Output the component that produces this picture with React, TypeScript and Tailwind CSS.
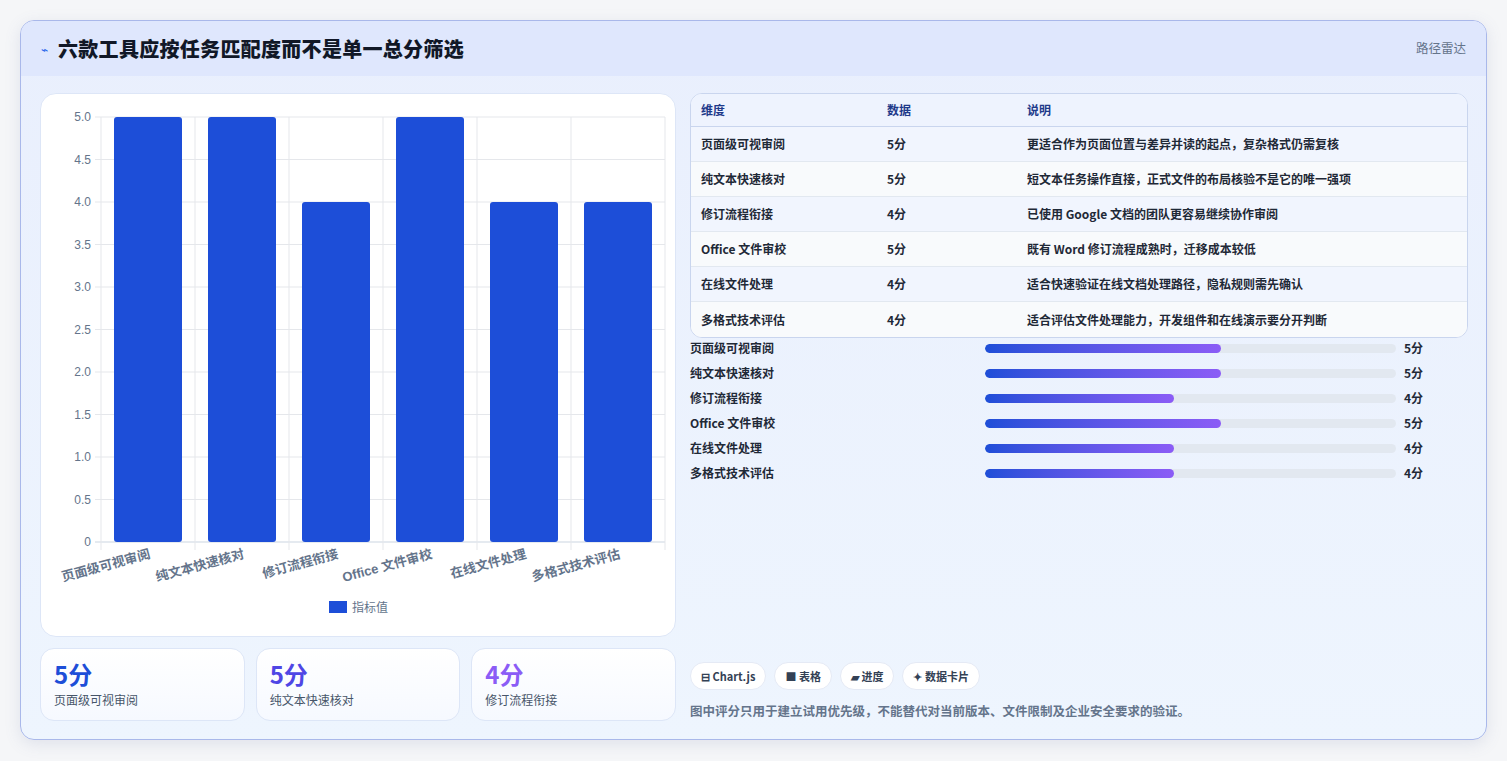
import React from "react";

const cats = ["页面级可视审阅", "纯文本快速核对", "修订流程衔接", "Office 文件审校", "在线文件处理", "多格式技术评估"];
const vals = [5, 5, 4, 5, 4, 4];
const notes = [
  "更适合作为页面位置与差异并读的起点，复杂格式仍需复核",
  "短文本任务操作直接，正式文件的布局核验不是它的唯一强项",
  "已使用 Google 文档的团队更容易继续协作审阅",
  "既有 Word 修订流程成熟时，迁移成本较低",
  "适合快速验证在线文档处理路径，隐私规则需先确认",
  "适合评估文件处理能力，开发组件和在线演示要分开判断",
];

function Chart() {
  const x0 = 60, y0 = 23, yb = 448, cw = 94;
  const ticks = [0, 0.5, 1, 1.5, 2, 2.5, 3, 3.5, 4, 4.5, 5];
  const yv = (v: number) => yb - (v / 5) * (yb - y0);
  return (
    <svg width="636" height="543" viewBox="0 0 636 543" style={{ fontFamily: "'Liberation Sans','Noto Sans CJK SC',sans-serif" }}>
      {ticks.map((t) => (
        <g key={t}>
          <line x1={x0 - 6} x2={624} y1={yv(t)} y2={yv(t)} stroke={t === 0 ? "#cbd5e1" : "#e5e7eb"} />
          <text x={x0 - 10} y={yv(t) + 4} textAnchor="end" fontSize="12" fill="#64748b">{t === 0 ? "0" : t.toFixed(1)}</text>
        </g>
      ))}
      {[0, 1, 2, 3, 4, 5, 6].map((i) => (
        <line key={i} x1={x0 + i * cw} x2={x0 + i * cw} y1={y0} y2={yb + 8} stroke="#e5e7eb" />
      ))}
      {vals.map((v, i) => (
        <rect key={i} x={x0 + i * cw + 13} y={yv(v)} width={68} height={yb - yv(v)} rx={3} fill="#1d4ed8" />
      ))}
      {cats.map((c, i) => (
        <text key={c} x={x0 + i * cw + 50} y={464} textAnchor="end" fontSize="13" fontWeight="700" fill="#64748b" transform={`rotate(-15 ${x0 + i * cw + 50} 464)`}>{c}</text>
      ))}
      <rect x={288} y={507} width={18} height={12} fill="#1d4ed8" />
      <text x={311} y={518} fontSize="12" fill="#64748b">指标值</text>
    </svg>
  );
}

export default function App() {
  const grad = (v: number) => (v === 5 ? "57.4%" : "46%");
  return (
    <div className="w-[1507px] h-[761px] bg-[#f5f6f8] pt-[20px] pl-[20px]" style={{ fontFamily: "'Noto Sans CJK SC','Noto Sans',sans-serif" }}>
      <div className="w-[1467px] h-[720px] rounded-[14px] border border-[#a9b8ea] overflow-hidden bg-gradient-to-b from-[#e9effd] to-[#eef5fe] shadow-[0_4px_16px_rgba(100,116,160,0.15)]">
        <div className="h-[55px] bg-[#dfe7fd] flex items-center justify-between pl-[20px] pr-[20px]">
          <div className="flex items-center gap-[10px]">
            <span className="text-[#2563eb] text-[12px]">⌁</span>
            <span className="text-[20px] font-black text-[#111827] tracking-[0.3px]">六款工具应按任务匹配度而不是单一总分筛选</span>
          </div>
          <span className="text-[12.5px] text-[#64748b]">路径雷达</span>
        </div>
        <div className="flex gap-[14px] pl-[19px] pt-[17px]">
          <div className="w-[636px] flex flex-col gap-[11px]">
            <div className="h-[544px] bg-white rounded-[16px] border border-[#dde6f7]">
              <Chart />
            </div>
            <div className="grid grid-cols-3 gap-[11px]">
              {[["5分", "页面级可视审阅", "text-[#1d4ed8]"], ["5分", "纯文本快速核对", "text-[#4f46e5]"], ["4分", "修订流程衔接", "text-[#8b5cf6]"]].map(([v, l, c]) => (
                <div key={l} className="h-[73px] rounded-[14px] border border-[#dde6f7] bg-gradient-to-b from-white to-[#f6f9ff] px-[13px] pt-[10px]">
                  <div className={`text-[24px] font-bold leading-[30px] ${c}`}>{v}</div>
                  <div className="text-[12px] text-[#475569] mt-[2px]">{l}</div>
                </div>
              ))}
            </div>
          </div>
          <div className="w-[778px] flex flex-col">
            <div className="rounded-[12px] border border-[#c9d5ee] overflow-hidden bg-white text-[12px]">
              <div className="h-[33px] bg-[#eef3fe] grid grid-cols-[186px_140px_1fr] items-center pl-[10px] font-semibold text-[#1e3a8a] border-b border-[#c9d5ee]">
                <span>维度</span><span>数据</span><span>说明</span>
              </div>
              {cats.map((c, i) => (
                <div key={c} className={`h-[35px] grid grid-cols-[186px_140px_1fr] items-center pl-[10px] font-semibold text-[#1f2937] border-b border-[#e2e8f0] last:border-b-0 ${i % 2 ? "bg-[#f8fafc]" : "bg-[#f1f5fe]"}`}>
                  <span>{c}</span><span>{vals[i]}分</span><span>{notes[i]}</span>
                </div>
              ))}
            </div>
            <div className="flex flex-col gap-[7px] mt-[1px] w-[778px]">
              {cats.map((c, i) => (
                <div key={c} className="grid grid-cols-[295px_411px_1fr] items-center h-[18px] text-[12px] font-semibold text-[#1f2937] whitespace-nowrap">
                  <span>{c}</span>
                  <div className="h-[9px] rounded-full bg-[#e2e8f0] overflow-hidden">
                    <div className="h-full rounded-full bg-gradient-to-r from-[#1d4ed8] to-[#8b5cf6]" style={{ width: grad(vals[i]) }} />
                  </div>
                  <span className="pl-[8px]">{vals[i]}分</span>
                </div>
              ))}
            </div>
            <div className="flex gap-[8px] mt-[180px]">
              {["⊟ Chart.js", "■ 表格", "▰ 进度", "✦ 数据卡片"].map((p) => (
                <span key={p} className="h-[28px] px-[10px] rounded-full bg-white border border-[#e5eaf5] text-[11px] font-semibold text-[#334155] flex items-center">{p}</span>
              ))}
            </div>
            <div className="mt-[12px] text-[12.5px] text-[#64748b] font-semibold">图中评分只用于建立试用优先级，不能替代对当前版本、文件限制及企业安全要求的验证。</div>
          </div>
        </div>
      </div>
    </div>
  );
}
